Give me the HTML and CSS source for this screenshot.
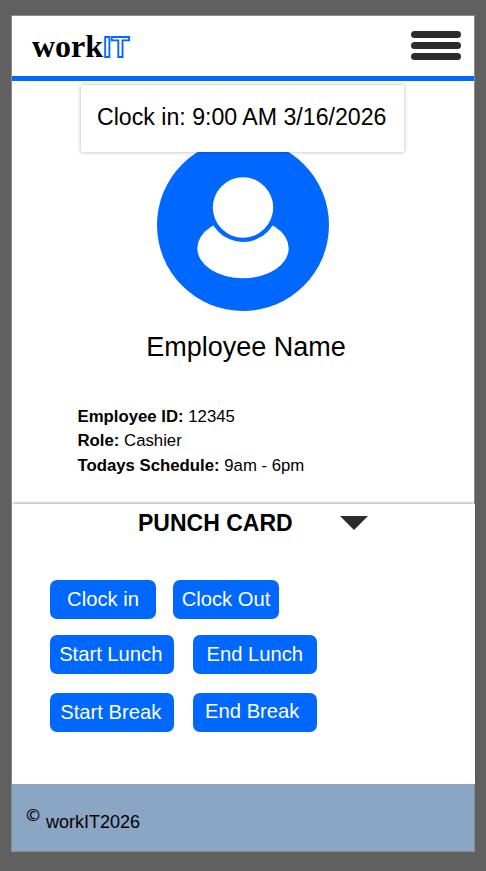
FILE: index.html
```html
<!DOCTYPE html>
<html lang="en">
<head>
<meta charset="utf-8">
<meta name="viewport" content="width=device-width, initial-scale=1">
<title>workIT</title>
<link rel="stylesheet" href="styles.css">
</head>
<body>
<div class="app">
  <header class="topbar">
    <div class="logo">work<span class="logo-it">IT</span></div>
    <button class="menu" aria-label="Menu"><span></span><span></span><span></span></button>
  </header>
  <main class="profile">
    <div class="toast">Clock in: 9:00 AM 3/16/2026</div>
    <svg class="avatar" viewBox="0 0 172 172" aria-hidden="true">
      <circle cx="86" cy="86" r="86" fill="#0068ff"/>
      <ellipse cx="86" cy="109.200" rx="45.700" ry="30" fill="#fff"/>
      <circle cx="86" cy="68.500" r="34.500" fill="#0068ff"/>
      <circle cx="86" cy="68.500" r="30.200" fill="#fff"/>
    </svg>
    <h1 class="name">Employee Name</h1>
    <div class="details">
      <p><b>Employee ID:</b> 12345</p>
      <p><b>Role:</b> Cashier</p>
      <p><b>Todays Schedule:</b> 9am - 6pm</p>
    </div>
  </main>
  <section class="punch">
    <div class="punch-head">
      <h2>PUNCH CARD</h2>
      <svg class="caret" viewBox="0 0 28 14" aria-hidden="true"><path d="M0 0H28L14 14Z" fill="#2c2c2c"/></svg>
    </div>
    <div class="row row-clock"><button class="btn">Clock in</button><button class="btn">Clock Out</button></div>
    <div class="row row-lunch"><button class="btn start">Start Lunch</button><button class="btn">End Lunch</button></div>
    <div class="row row-break"><button class="btn start">Start Break</button><button class="btn end-break">End Break</button></div>
  </section>
  <footer class="footer"><span class="copy">©</span><span>workIT2026</span></footer>
</div>
</body>
</html>
```
FILE: styles.css
```css
* { box-sizing: border-box; }
body {
  margin: 0;
  height: 871px;
  padding: 15px 11px 0;
  background: #606060;
  color: #000;
  font-family: "Liberation Sans", Arial, sans-serif;
  overflow: hidden;
}
h1, h2, p { margin: 0; font-weight: normal; }
button { border: 0; padding: 0; font: inherit; }
.app {
  width: 464px;
  height: 837px;
  border: 1px solid #8b8b8b;
  background: #fff;
  display: flex;
  flex-direction: column;
}
.topbar {
  height: 65px;
  flex: none;
  display: flex;
  justify-content: space-between;
  align-items: flex-start;
  padding: 15px 13px 0 20px;
  border-bottom: 5px solid #0068ff;
}
.logo {
  display: flex;
  align-items: baseline;
  margin-top: -1px;
  font: bold 32px/32px "Liberation Serif", "Times New Roman", serif;
  white-space: nowrap;
}
.logo-it {
  font: bold 29.500px/32px "Liberation Sans", Arial, sans-serif;
  color: #fff;
  -webkit-text-stroke: 1.8px #0068ff;
}
.menu {
  width: 50px;
  height: 29px;
  background: none;
  display: flex;
  flex-direction: column;
  justify-content: space-between;
}
.menu span { display: block; width: 50px; height: 7px; border-radius: 4px; background: #2c2c2c; }
.profile {
  height: 423px;
  flex: none;
  padding-top: 4px;
  display: flex;
  flex-direction: column;
  align-items: center;
}
.toast {
  position: relative;
  z-index: 1;
  width: 323px;
  height: 67px;
  flex: none;
  margin-right: 1px;
  padding-left: 16px;
  font-size: 23.150px;
  line-height: 65px;
  white-space: nowrap;
  background: #fff;
  box-shadow: 0 0 4px rgba(0, 0, 0, .3);
}
.avatar { width: 172px; height: 172px; flex: none; margin-top: -13px; }
.name { font-size: 27px; line-height: 32px; margin-top: 20px; margin-left: 6px; }
.details { align-self: flex-start; margin: 42px 0 0 65.500px; font-size: 16.750px; line-height: 24.400px; }
.punch {
  position: relative;
  width: 463px;
  height: 280px;
  flex: none;
  background: #fff;
  box-shadow: 0 -2px 3px -1px rgba(0, 0, 0, .35);
}
.punch-head { display: flex; align-items: center; height: 38px; padding-left: 126px; }
.punch-head h2 { font-size: 23px; font-weight: bold; line-height: 38px; }
.caret { width: 28px; height: 14px; margin-left: 47px; }
.row { display: flex; padding-left: 38px; gap: 19.500px; }
.row-clock { margin-top: 38px; gap: 17px; }
.row-lunch { margin-top: 16px; }
.row-break { margin-top: 18.500px; }
.btn {
  width: 123.500px;
  height: 39px;
  border-radius: 7px;
  background: #0068ff;
  color: #fff;
  font-size: 20.200px;
  line-height: 36px;
  padding-bottom: 1px;
  text-align: center;
}
.row-clock .btn { width: 106px; }
.start { padding-right: 2px; }
.row-break .start { padding-bottom: 0; }
.end-break { padding-right: 5px; padding-bottom: 2px; }
.footer {
  height: 67px;
  flex: none;
  display: flex;
  padding: 26px 0 0 14px;
  background: #8ba5c4;
  font-size: 18px;
  line-height: 24px;
}
.copy { width: 20px; font: 600 17px/24px "Open Sans", sans-serif; margin-top: -7px; }
```
